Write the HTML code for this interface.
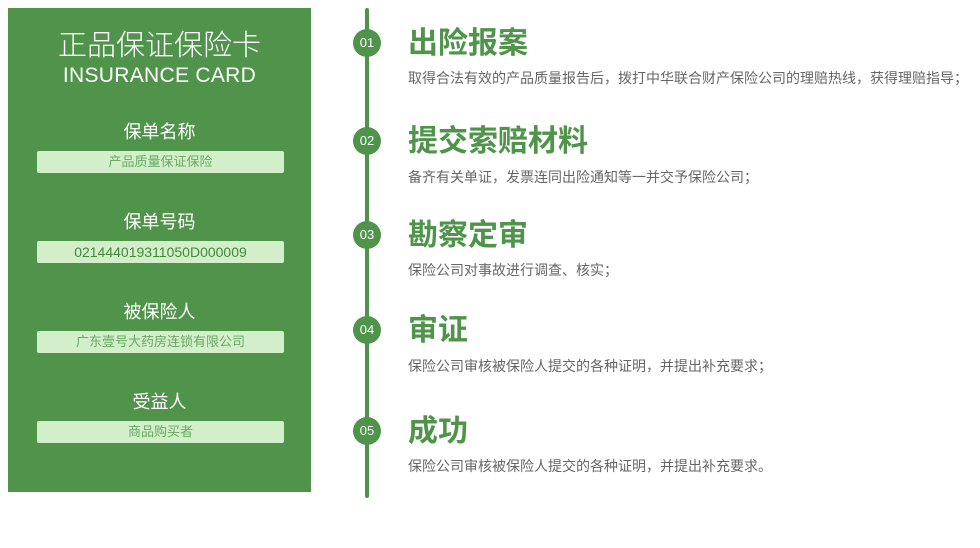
<!DOCTYPE html>
<html><head><meta charset="utf-8"><style>
*{margin:0;padding:0;box-sizing:border-box}
body{width:980px;height:548px;background:#fff;position:relative;overflow:hidden;font-family:"Liberation Sans","Noto Sans CJK SC",sans-serif}
.card{position:absolute;left:8px;top:8px;width:303px;height:484px;background:#4f944a;color:#fff;text-align:center}
.t1{position:absolute;left:0;width:303px;top:20px;font-size:29px;line-height:36px;font-weight:300}
.t2{position:absolute;left:0;width:303px;top:54px;font-size:21px;line-height:28px;font-weight:300;letter-spacing:0.3px}
.lab{position:absolute;left:0;width:303px;font-size:18px;line-height:24px}
.box{position:absolute;left:29px;width:247px;height:22px;background:#d2efca;border-radius:2px;color:#6aa865;font-size:13px;line-height:22px}
.line{position:absolute;left:365px;top:8px;width:4px;height:490px;background:#4f944a;border-radius:2px}
.dot{position:absolute;left:353px;width:28px;height:28px;border-radius:50%;background:#4f944a;color:#fff;font-size:13px;line-height:28px;text-align:center}
.h{position:absolute;left:408px;font-size:30px;font-weight:bold;color:#4f944a;line-height:34px;white-space:nowrap}
.d{position:absolute;left:408px;font-size:14px;color:#666;line-height:18px;white-space:nowrap}
</style></head><body>
<div class="card">
<div class="t1">正品保证保险卡</div>
<div class="t2">INSURANCE CARD</div>
<div class="lab" style="top:112px">保单名称</div>
<div class="box" style="top:143px">产品质量保证保险</div>
<div class="lab" style="top:202px">保单号码</div>
<div class="box" style="top:233px;color:#3f8a3a;font-size:14px">021444019311050D000009</div>
<div class="lab" style="top:292px">被保险人</div>
<div class="box" style="top:323px">广东壹号大药房连锁有限公司</div>
<div class="lab" style="top:382px">受益人</div>
<div class="box" style="top:413px">商品购买者</div>
</div>
<div class="line"></div>
<div class="dot" style="top:29px">01</div>
<div class="dot" style="top:127px">02</div>
<div class="dot" style="top:221px">03</div>
<div class="dot" style="top:316px">04</div>
<div class="dot" style="top:417px">05</div>
<div class="h" style="top:27px">出险报案</div>
<div class="d" style="top:69px">取得合法有效的产品质量报告后，拨打中华联合财产保险公司的理赔热线，获得理赔指导；</div>
<div class="h" style="top:125px">提交索赔材料</div>
<div class="d" style="top:168px">备齐有关单证，发票连同出险通知等一并交予保险公司；</div>
<div class="h" style="top:219px">勘察定审</div>
<div class="d" style="top:261px">保险公司对事故进行调查、核实；</div>
<div class="h" style="top:314px">审证</div>
<div class="d" style="top:357px">保险公司审核被保险人提交的各种证明，并提出补充要求；</div>
<div class="h" style="top:415px">成功</div>
<div class="d" style="top:457px">保险公司审核被保险人提交的各种证明，并提出补充要求。</div>
</body></html>
